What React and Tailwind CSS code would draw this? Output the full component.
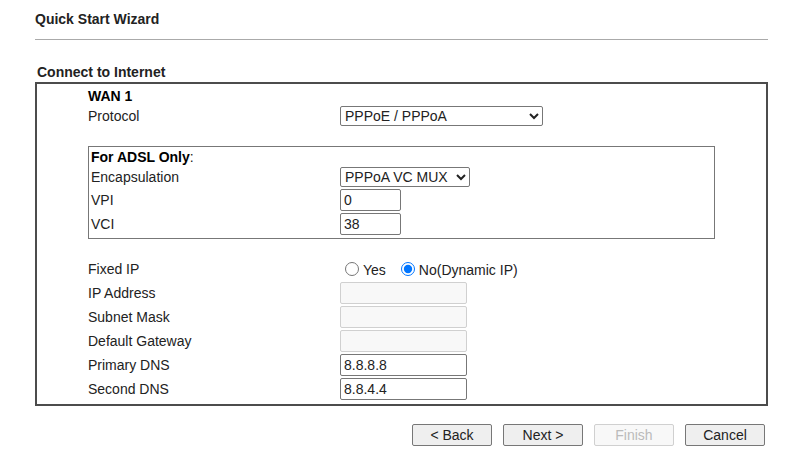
import React, { useState } from "react";

export default function App() {
  const [fixedIp, setFixedIp] = useState(false);

  return (
    <form
      className="min-h-screen bg-white pt-[9px] pb-2 pl-[35px] pr-[17px] font-['Liberation_Sans',Arial,sans-serif] text-sm/5 text-[#222]"
      onSubmit={(e) => e.preventDefault()}
    >
      <h1 className="font-bold">Quick Start Wizard</h1>
      <hr className="mt-[10px] border-[#aaa]" />

      <h2 className="mt-[22px] pl-[2px] font-bold">Connect to Internet</h2>
      <div className="border-2 border-[#4c4c4c] px-[51px] pt-[2px] pb-1">
        <h3 className="font-bold text-black">WAN 1</h3>
        <Row id="protocol" label="Protocol">
          <Select id="protocol" className="w-[203px]">
            <option>PPPoE / PPPoA</option>
            <option>MPoA / Static or Dynamic IP</option>
          </Select>
        </Row>

        <div className="mt-5 border border-[#777] pb-[3px] pl-[2px]">
          <h4>
            <b className="text-black">For ADSL Only</b>:
          </h4>
          <div className="space-y-[2px]">
            <Row id="encapsulation" label="Encapsulation" nested>
              <Select id="encapsulation" className="w-[130px]">
                <option>PPPoA VC MUX</option>
                <option>PPPoE LLC/SNAP</option>
              </Select>
            </Row>
            <Row id="vpi" label="VPI" nested>
              <TextInput id="vpi" className="w-[61px]" defaultValue="0" />
            </Row>
            <Row id="vci" label="VCI" nested>
              <TextInput id="vci" className="w-[61px]" defaultValue="38" />
            </Row>
          </div>
        </div>

        <div className="mt-[19px] space-y-[2px]">
          <div
            className="grid grid-cols-[252px_1fr] items-center"
            role="radiogroup"
            aria-labelledby="fixed-ip"
          >
            <span id="fixed-ip">Fixed IP</span>
            <div className="flex gap-[15px] pl-[5px]">
              <Radio
                label="Yes"
                checked={fixedIp}
                onChange={() => setFixedIp(true)}
              />
              <Radio
                label="No(Dynamic IP)"
                checked={!fixedIp}
                onChange={() => setFixedIp(false)}
              />
            </div>
          </div>
          <Row id="ip" label="IP Address">
            <TextInput id="ip" className="w-[127px]" disabled={!fixedIp} />
          </Row>
          <Row id="mask" label="Subnet Mask">
            <TextInput id="mask" className="w-[127px]" disabled={!fixedIp} />
          </Row>
          <Row id="gateway" label="Default Gateway">
            <TextInput id="gateway" className="w-[127px]" disabled={!fixedIp} />
          </Row>
          <Row id="dns1" label="Primary DNS">
            <TextInput id="dns1" className="w-[127px]" defaultValue="8.8.8.8" />
          </Row>
          <Row id="dns2" label="Second DNS">
            <TextInput id="dns2" className="w-[127px]" defaultValue="8.8.4.4" />
          </Row>
        </div>
      </div>

      <div className="mt-[18px] flex justify-end gap-[11px] pr-[3px]">
        <Button>&lt; Back</Button>
        <Button>Next &gt;</Button>
        <Button disabled>Finish</Button>
        <Button>Cancel</Button>
      </div>
    </form>
  );
}

// nested rows start 3px further in, so their label column is narrower
function Row({ id, label, nested = false, children }) {
  return (
    <div
      className={
        nested
          ? "grid grid-cols-[249px_1fr] items-center"
          : "grid grid-cols-[252px_1fr] items-center"
      }
    >
      <label htmlFor={id}>{label}</label>
      <div className="flex">{children}</div>
    </div>
  );
}

function Select({ className, ...props }) {
  return (
    <select
      className={`h-5 rounded-[2px] border border-[#777] bg-white text-[#222] ${className}`}
      {...props}
    />
  );
}

function TextInput({ className, ...props }) {
  return (
    <input
      type="text"
      className={`h-[22px] rounded-[2px] border border-[#777] bg-white px-[3px] disabled:border-[#d0d0d0] disabled:bg-[#f8f8f8] ${className}`}
      {...props}
    />
  );
}

function Radio({ label, ...props }) {
  return (
    <label className="flex items-center gap-1">
      <input type="radio" name="fixedIp" className="size-[14px]" {...props} />
      <span className="pt-[2px]">{label}</span>
    </label>
  );
}

function Button(props) {
  return (
    <button
      type="button"
      className="h-[22px] w-20 rounded-[2px] border border-[#777] bg-[#efefef] disabled:border-[#d0d0d0] disabled:bg-[#f8f8f8] disabled:text-[#bbb]"
      {...props}
    />
  );
}
